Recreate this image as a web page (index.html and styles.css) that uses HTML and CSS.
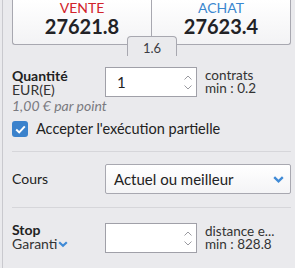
FILE: index.html
```html
<!DOCTYPE html>
<html>
<head>
<meta charset="UTF-8">
<link rel="stylesheet" href="styles.css">
</head>
<body>
<div class="panel">
	<div class="prices">
		<div class="price sell">
			<div class="side">VENTE</div>
			<div class="value">27621.8</div>
		</div>
		<div class="price buy">
			<div class="side">ACHAT</div>
			<div class="value">27623.4</div>
		</div>
		<div class="spread">1.6</div>
	</div>

	<div class="row qty">
		<div class="label">
			<div class="title">Quantité</div>
			<div class="sub">EUR(E)</div>
			<div class="note">1,00 € par point</div>
		</div>
		<div class="spin">
			<span class="num">1</span>
			<span class="arrows">
				<svg width="8" height="5" viewBox="0 0 8 5"><path d="M0.5 4.5 L4 1 L7.5 4.5" fill="none" stroke="#9a9aa0" stroke-width="1"/></svg>
				<svg width="8" height="5" viewBox="0 0 8 5"><path d="M0.5 0.5 L4 4 L7.5 0.5" fill="none" stroke="#9a9aa0" stroke-width="1"/></svg>
			</span>
		</div>
		<div class="unit"><div>contrats</div><div>min : 0.2</div></div>
	</div>

	<div class="check">
		<span class="box">
			<svg width="11" height="9" viewBox="0 0 11 9"><path d="M1.2 4.6 L4.2 7.4 L9.8 1.4" fill="none" stroke="#fff" stroke-width="2"/></svg>
		</span>
		<span>Accepter l'exécution partielle</span>
	</div>

	<div class="sep"></div>

	<div class="row cours">
		<div class="label"><div class="plain">Cours</div></div>
		<div class="select">
			<span>Actuel ou meilleur</span>
			<svg width="11" height="7" viewBox="0 0 11 7"><path d="M1.2 1.2 L5.5 5.3 L9.8 1.2" fill="none" stroke="#3f8ad6" stroke-width="2.4"/></svg>
		</div>
	</div>

	<div class="sep"></div>

	<div class="row stop">
		<div class="label">
			<div class="title">Stop</div>
			<div class="sub">Garanti<svg width="10" height="7" viewBox="0 0 10 7"><path d="M1.2 1.2 L5 4.8 L8.8 1.2" fill="none" stroke="#3f8ad6" stroke-width="2.2"/></svg></div>
		</div>
		<div class="spin">
			<span class="num"></span>
			<span class="arrows">
				<svg width="8" height="5" viewBox="0 0 8 5"><path d="M0.5 4.5 L4 1 L7.5 4.5" fill="none" stroke="#9a9aa0" stroke-width="1"/></svg>
				<svg width="8" height="5" viewBox="0 0 8 5"><path d="M0.5 0.5 L4 4 L7.5 0.5" fill="none" stroke="#9a9aa0" stroke-width="1"/></svg>
			</span>
		</div>
		<div class="unit"><div>distance e...</div><div>min : 828.8</div></div>
	</div>
</div>
</body>
</html>
```

FILE: styles.css
```css
* {
	margin: 0;
	padding: 0;
	box-sizing: border-box;
}
body {
	background: #eaeaed;
	font-family: Lato, "Open Sans", sans-serif;
	color: #2a2a2e;
	width: 295px;
	height: 268px;
	overflow: hidden;
}
.panel {
	margin-left: 2px;
	border-left: 1px solid #c9c9ce;
	padding-left: 9px;
	width: 289px;
	height: 268px;
}

.prices {
	position: relative;
	display: flex;
	height: 45px;
	width: 279px;
}
.price {
	flex: 1;
	border: 1px solid #a8a8b0;
	border-top: none;
	background: linear-gradient(#ffffff, #f3f3f5);
	text-align: center;
}
.sell {
	border-right: none;
	border-bottom-left-radius: 3px;
}
.buy {
	border-bottom-right-radius: 3px;
}
.side {
	font-size: 14px;
	line-height: 16px;
}
.sell .side { color: #d2232a; }
.buy .side { color: #3a87cf; }
.value {
	font-size: 20px;
	font-weight: bold;
	line-height: 20px;
	color: #222226;
}
.spread {
	position: absolute;
	left: 115px;
	top: 36px;
	width: 50px;
	height: 20px;
	background: #eaeaed;
	border: 1px solid #a8a8b0;
	border-bottom: none;
	border-radius: 4px 4px 0 0;
	text-align: center;
	font-size: 13px;
	line-height: 22px;
	color: #3c3c44;
}

.row {
	display: flex;
	align-items: flex-start;
}
.label {
	width: 93px;
	white-space: nowrap;
}
.title {
	font-size: 14px;
	font-weight: bold;
	line-height: 14px;
	color: #222;
}
.sub {
	font-size: 14px;
	line-height: 14px;
	color: #333;
}
.sub svg {
	margin-left: 1px;
	vertical-align: 1px;
}
.plain {
	font-size: 14px;
	line-height: 16px;
	color: #222;
}
.qty {
	margin-top: 22px;
}
.qty .label {
	padding-top: 2px;
}
.spin {
	flex: none;
	width: 92px;
	height: 30px;
	border: 1px solid #a0a0a8;
	background: #fff;
	display: flex;
	align-items: center;
	justify-content: space-between;
	padding: 0 4px 0 11px;
}
.num {
	font-size: 15px;
	color: #222;
}
.arrows {
	display: flex;
	flex-direction: column;
	gap: 5px;
}
.arrows svg {
	display: block;
}
.unit {
	margin-left: 8px;
	font-size: 13.5px;
	line-height: 13px;
	color: #333;
	padding-top: 2px;
}
.note {
	font-size: 14px;
	font-style: italic;
	color: #7a7a80;
	line-height: 14px;
	margin-top: 2px;
}

.check {
	display: flex;
	align-items: center;
	margin-top: 8px;
	font-size: 14.5px;
	line-height: 16px;
	color: #222;
}
.box {
	width: 16px;
	height: 16px;
	border-radius: 3px;
	background: #3b82cc;
	display: flex;
	align-items: center;
	justify-content: center;
	margin-right: 8px;
}

.sep {
	height: 1px;
	background: #d6d6da;
	width: 279px;
	margin-top: 14px;
}
.cours {
	align-items: center;
	margin-top: 12px;
}
.select {
	width: 186px;
	height: 30px;
	border: 1px solid #a8a8b0;
	border-radius: 2px;
	background: linear-gradient(#ffffff, #f4f4f6);
	display: flex;
	align-items: center;
	justify-content: space-between;
	padding: 0 6px 0 8px;
	font-size: 15px;
	color: #222;
}
.cours + .sep {
	margin-top: 13px;
}
.stop {
	margin-top: 15px;
}
```
